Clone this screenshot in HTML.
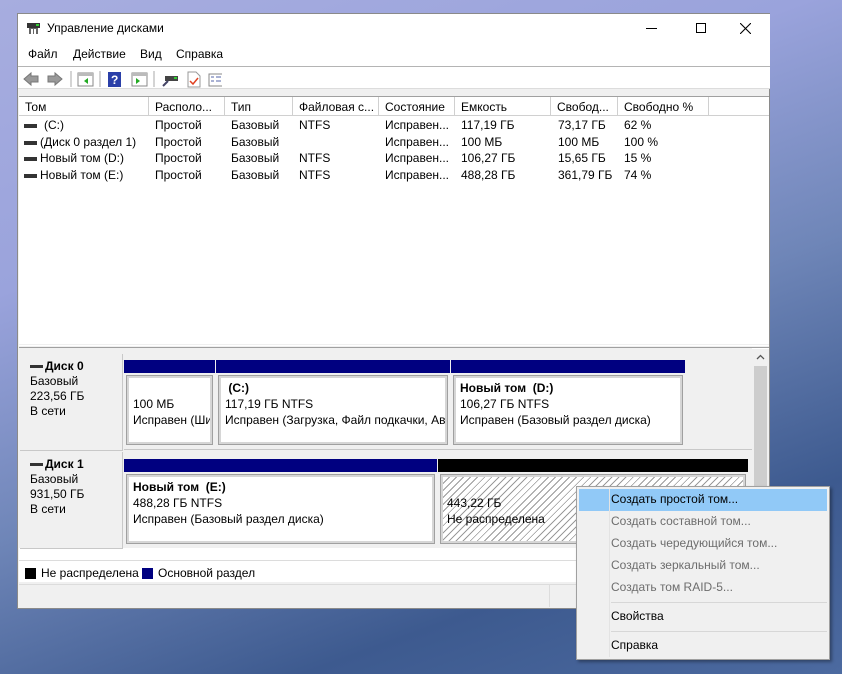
<!DOCTYPE html>
<html><head><meta charset="utf-8"><style>
*{margin:0;padding:0;box-sizing:border-box}
body{width:842px;height:674px;overflow:hidden;position:relative;font-family:"Segoe UI","Liberation Sans","DejaVu Sans",sans-serif;font-size:12px;color:#000;
background:linear-gradient(160deg,#a7addf 0%,#9aa3dc 30%,#6f86b8 55%,#3d5a8f 80%,#4c6aa0 100%);}
.a{position:absolute;white-space:nowrap}
.win{position:absolute;left:17px;top:13px;width:753px;height:596px;background:#f0f0f0;border:1px solid #8a8a8a}
.hdr{position:absolute;top:97px;height:19px;background:#fff;border-right:1px solid #d0d0d0;border-bottom:1px solid #d0d0d0;padding:3px 0 0 6px;white-space:nowrap}
.row{position:absolute;left:22px;height:17px;white-space:nowrap}
.c{position:absolute;top:0}
.part{position:absolute;background:#f0f0f0}
.bar{position:absolute;left:0;right:0;top:0;height:13px;background:#000080}
.box{position:absolute;left:3px;right:3px;top:16px;bottom:4px;background:#fff;border:2px solid #d6d6d6;outline:1px solid #a0a0a0;padding:2px 4px;line-height:16px;overflow:hidden;white-space:nowrap}
.dl{position:absolute;left:20px;width:103px;background:#f0f0f0;border-right:1px solid #c8c8c8;border-bottom:1px solid #c8c8c8;padding:5px 0 0 10px;line-height:15px;white-space:nowrap}
.mi{position:absolute;left:34px;font-size:12px;white-space:nowrap}
.g{color:#6d6d6d}
</style></head><body>
<div class="win"></div>
<div class="a" style="left:18px;top:14px;width:752px;height:30px;background:#fff"></div>
<svg class="a" style="left:26px;top:22px" width="16" height="14"><rect x="1" y="1" width="13" height="5" fill="#333"/><rect x="10" y="2" width="3" height="2" fill="#3c3"/><rect x="3" y="6" width="9" height="6" fill="#666"/><rect x="5" y="7" width="2" height="5" fill="#fff"/><rect x="8" y="7" width="2" height="5" fill="#fff"/></svg>
<div class="a" style="left:47px;top:21px;font-size:12px">Управление дисками</div>
<div class="a" style="left:646px;top:28px;width:11px;height:1px;background:#000"></div>
<div class="a" style="left:696px;top:23px;width:10px;height:10px;border:1px solid #000"></div>
<svg class="a" style="left:740px;top:23px" width="11" height="11"><path d="M0 0L11 11M11 0L0 11" stroke="#000" stroke-width="1.1"/></svg>
<div class="a" style="left:18px;top:44px;width:752px;height:22px;background:#fff"></div>
<div class="a" style="left:28px;top:47px">Файл</div>
<div class="a" style="left:73px;top:47px">Действие</div>
<div class="a" style="left:140px;top:47px">Вид</div>
<div class="a" style="left:176px;top:47px">Справка</div>
<div class="a" style="left:18px;top:66px;width:752px;height:1px;background:#b4b4b4"></div>
<div class="a" style="left:18px;top:67px;width:752px;height:22px;background:#fff;border-bottom:1px solid #dcdcdc"></div>
<svg class="a" style="left:22px;top:70px" width="200" height="18">
<path d="M2 9 L9 3 V6 H16 V12 H9 V15 Z" fill="#999" stroke="#777"/>
<path d="M40 9 L33 3 V6 H26 V12 H33 V15 Z" fill="#999" stroke="#777"/>
<line x1="49" y1="1" x2="49" y2="17" stroke="#aaa"/>
<rect x="56" y="3" width="15" height="13" fill="#fff" stroke="#888"/><rect x="56" y="3" width="15" height="3" fill="#bbb"/><path d="M66 8 L62 11 L66 14Z" fill="#2a2"/>
<line x1="78" y1="1" x2="78" y2="17" stroke="#aaa"/>
<rect x="86" y="2" width="13" height="15" fill="#2a3fa8"/><text x="89" y="14" fill="#fff" font-size="12" font-family="Liberation Sans" font-weight="bold">?</text>
<rect x="110" y="3" width="15" height="13" fill="#fff" stroke="#888"/><rect x="110" y="3" width="15" height="3" fill="#bbb"/><path d="M114 8 L118 11 L114 14Z" fill="#2a2"/>
<line x1="132" y1="1" x2="132" y2="17" stroke="#aaa"/>
<rect x="143" y="6" width="13" height="5" fill="#444"/><rect x="152" y="7" width="3" height="2" fill="#3c3"/><line x1="146" y1="11" x2="141" y2="16" stroke="#446" stroke-width="2"/>
<path d="M166 2 H174 L178 6 V17 H166Z" fill="#fff" stroke="#999"/><path d="M168 11 L171 14 L176 8" stroke="#e04020" fill="none" stroke-width="1.5"/>
<rect x="187" y="4" width="14" height="12" fill="#fff" stroke="#888"/><path d="M189 7 h3 M194 7 h5 M189 11 h3 M194 11 h5" stroke="#56a"/>
</svg>
<div class="a" style="left:19px;top:96px;width:750px;height:248px;background:#fff;border-top:1px solid #a0a0a0"></div>
<div class="hdr" style="left:19px;width:130px">Том</div>
<div class="hdr" style="left:149px;width:76px">Располо...</div>
<div class="hdr" style="left:225px;width:68px">Тип</div>
<div class="hdr" style="left:293px;width:86px">Файловая с...</div>
<div class="hdr" style="left:379px;width:76px">Состояние</div>
<div class="hdr" style="left:455px;width:96px">Емкость</div>
<div class="hdr" style="left:551px;width:67px">Свобод...</div>
<div class="hdr" style="left:618px;width:91px">Свободно %</div>
<div class="hdr" style="left:709px;width:60px;border-right:none"></div>
<div class="row" style="top:118px;width:740px">
<div class="c" style="left:2px;top:6px;width:13px;height:4px;background:#333"></div>
<div class="c" style="left:22px">(C:)</div><div class="c" style="left:133px">Простой</div><div class="c" style="left:209px">Базовый</div><div class="c" style="left:277px">NTFS</div><div class="c" style="left:363px">Исправен...</div><div class="c" style="left:439px">117,19 ГБ</div><div class="c" style="left:536px">73,17 ГБ</div><div class="c" style="left:602px">62 %</div></div>
<div class="row" style="top:135px;width:740px">
<div class="c" style="left:2px;top:6px;width:13px;height:4px;background:#333"></div>
<div class="c" style="left:18px">(Диск 0 раздел 1)</div><div class="c" style="left:133px">Простой</div><div class="c" style="left:209px">Базовый</div><div class="c" style="left:363px">Исправен...</div><div class="c" style="left:439px">100 МБ</div><div class="c" style="left:536px">100 МБ</div><div class="c" style="left:602px">100 %</div></div>
<div class="row" style="top:151px;width:740px">
<div class="c" style="left:2px;top:6px;width:13px;height:4px;background:#333"></div>
<div class="c" style="left:18px">Новый том (D:)</div><div class="c" style="left:133px">Простой</div><div class="c" style="left:209px">Базовый</div><div class="c" style="left:277px">NTFS</div><div class="c" style="left:363px">Исправен...</div><div class="c" style="left:439px">106,27 ГБ</div><div class="c" style="left:536px">15,65 ГБ</div><div class="c" style="left:602px">15 %</div></div>
<div class="row" style="top:168px;width:740px">
<div class="c" style="left:2px;top:6px;width:13px;height:4px;background:#333"></div>
<div class="c" style="left:18px">Новый том (E:)</div><div class="c" style="left:133px">Простой</div><div class="c" style="left:209px">Базовый</div><div class="c" style="left:277px">NTFS</div><div class="c" style="left:363px">Исправен...</div><div class="c" style="left:439px">488,28 ГБ</div><div class="c" style="left:536px">361,79 ГБ</div><div class="c" style="left:602px">74 %</div></div>
<div class="a" style="left:19px;top:345px;width:750px;height:1px;background:#fff"></div>
<div class="a" style="left:19px;top:347px;width:750px;height:1px;background:#a0a0a0"></div>
<div class="a" style="left:19px;top:348px;width:750px;height:234px;background:#fff"></div>
<div class="a" style="left:19px;top:348px;width:733px;height:200px;background:#f0f0f0"></div>
<div class="a" style="left:752px;top:349px;width:17px;height:200px;background:#f0f0f0"></div>
<div class="a" style="left:754px;top:366px;width:13px;height:180px;background:#cdcdcd"></div>
<svg class="a" style="left:756px;top:354px" width="9" height="6"><path d="M1 5L4.5 1.5L8 5" stroke="#555" fill="none" stroke-width="1.3"/></svg>
<div class="dl" style="top:354px;height:97px"><b><span style="display:inline-block;width:13px;height:3px;background:#333;vertical-align:middle;margin-right:2px"></span>Диск 0</b><br>Базовый<br>223,56 ГБ<br>В сети</div>
<div class="dl" style="top:452px;height:97px"><b><span style="display:inline-block;width:13px;height:3px;background:#333;vertical-align:middle;margin-right:2px"></span>Диск 1</b><br>Базовый<br>931,50 ГБ<br>В сети</div>
<div class="part" style="left:124px;top:360px;width:91px;height:88px"><div class="bar"></div><div class="box"><br>100 МБ<br>Исправен (Ши</div></div>
<div class="part" style="left:216px;top:360px;width:234px;height:88px"><div class="bar"></div><div class="box"><b>&nbsp;(C:)</b><br>117,19 ГБ NTFS<br>Исправен (Загрузка, Файл подкачки, Ав</div></div>
<div class="part" style="left:451px;top:360px;width:234px;height:88px"><div class="bar"></div><div class="box"><b>Новый том&nbsp; (D:)</b><br>106,27 ГБ NTFS<br>Исправен (Базовый раздел диска)</div></div>
<div class="a" style="left:124px;top:449px;width:628px;height:1px;background:#c8c8c8"></div>
<div class="part" style="left:124px;top:459px;width:313px;height:88px"><div class="bar"></div><div class="box"><b>Новый том&nbsp; (E:)</b><br>488,28 ГБ NTFS<br>Исправен (Базовый раздел диска)</div></div>
<div class="part" style="left:438px;top:459px;width:310px;height:88px"><div class="bar" style="background:#000"></div><div class="box" style="background:repeating-linear-gradient(135deg,#fff 0 4px,#9a9a9a 4px 5px)"><br>443,22 ГБ<br>Не распределена</div></div>
<div class="a" style="left:19px;top:560px;width:750px;height:1px;background:#dcdcdc"></div>
<div class="a" style="left:25px;top:568px;width:11px;height:11px;background:#000"></div>
<div class="a" style="left:41px;top:566px">Не распределена</div>
<div class="a" style="left:142px;top:568px;width:11px;height:11px;background:#000080"></div>
<div class="a" style="left:158px;top:566px">Основной раздел</div>
<div class="a" style="left:19px;top:584px;width:750px;height:1px;background:#dcdcdc"></div>
<div class="a" style="left:549px;top:585px;width:1px;height:22px;background:#dcdcdc"></div>
<div class="a" style="left:576px;top:486px;width:254px;height:174px;background:#f0f0f0;border:1px solid #a0a0a0;box-shadow:2px 2px 3px rgba(0,0,0,.35)">
<div class="a" style="left:2px;top:2px;width:248px;height:22px;background:#91c9f7"></div>
<div class="a" style="left:32px;top:2px;width:1px;height:168px;background:#e3e3e3"></div>
<div class="mi" style="top:5px">Создать простой том...</div>
<div class="mi g" style="top:27px">Создать составной том...</div>
<div class="mi g" style="top:49px">Создать чередующийся том...</div>
<div class="mi g" style="top:71px">Создать зеркальный том...</div>
<div class="mi g" style="top:93px">Создать том RAID-5...</div>
<div class="a" style="left:34px;top:115px;width:216px;height:1px;background:#d7d7d7"></div>
<div class="mi" style="top:122px">Свойства</div>
<div class="a" style="left:34px;top:144px;width:216px;height:1px;background:#d7d7d7"></div>
<div class="mi" style="top:151px">Справка</div>
</div>
</body></html>
